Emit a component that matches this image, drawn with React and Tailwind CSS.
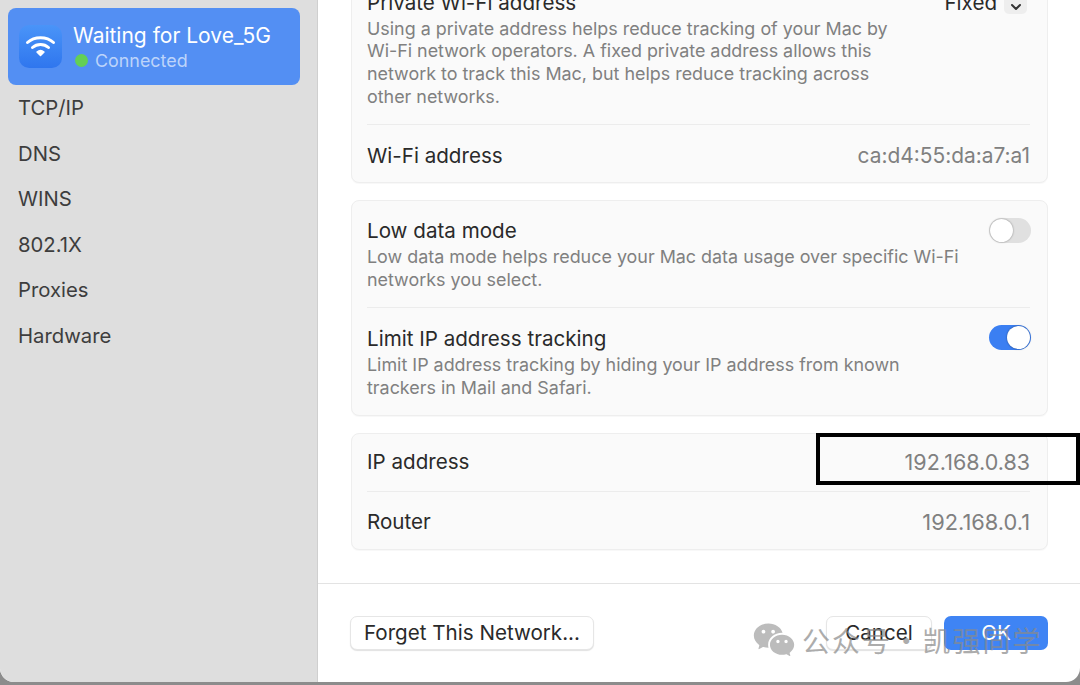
import { RiWechatFill } from "react-icons/ri";

const font = { fontFamily: "Inter, 'Noto Sans CJK SC', sans-serif" };

function WifiIcon() {
  return (
    <div className="w-[43px] h-[43px] rounded-[10px] bg-gradient-to-b from-[#4a94f8] to-[#2f76ee] flex items-center justify-center shrink-0">
      <svg width="31" height="25" viewBox="0 0 31 25" fill="none" stroke="white" strokeLinecap="round">
        <path d="M2.5 8.5C9.5 2 21.5 2 28.5 8.5" strokeWidth="3" />
        <path d="M7.5 13.5C12 9.5 19 9.5 23.5 13.5" strokeWidth="3" />
        <path d="M12 18C14 16.4 17 16.4 19 18L15.5 21.5Z" strokeWidth="1.5" fill="white" strokeLinejoin="round" />
      </svg>
    </div>
  );
}

function Toggle({ on }) {
  return (
    <div className={`w-[42px] h-[25px] -mr-[1px] rounded-full p-[1px] flex shrink-0 ${on ? "bg-[#3b7ff2] justify-end" : "bg-[#e0e0e0] justify-start"}`}>
      <div className="w-[23px] h-[23px] rounded-full bg-white shadow-[0_0_2px_rgba(0,0,0,0.45)]" />
    </div>
  );
}

const Card = ({ className = "", children }) => (
  <div className={`bg-[#fafafa] border border-[#eeeeee] rounded-[8px] pl-[15px] pr-[17px] shadow-[0_1px_1px_rgba(0,0,0,0.03)] ${className}`}>{children}</div>
);

const Label = ({ children }) => <div className="text-[20.6px] leading-[26px] text-[#2a2a2a] whitespace-nowrap">{children}</div>;
const Desc = ({ children, className = "" }) => <p className={`text-[17.9px] leading-[22.7px] text-[#808080] whitespace-nowrap ${className}`}>{children}</p>;

function ToggleRow({ title, desc, on, className, descClass }) {
  return (
    <div className={`flex justify-between ${className}`}>
      <div>
        <Label>{title}</Label>
        <Desc className={descClass}>{desc}</Desc>
      </div>
      <Toggle on={on} />
    </div>
  );
}

export default function App() {
  return (
    <div className="relative w-[1080px] h-[685px] overflow-hidden bg-[#8c8c8c]" style={font}>
      <div className="flex h-[682px] rounded-b-[14px] overflow-hidden bg-white">
        <aside className="w-[318px] shrink-0 bg-[#dedede] border-r border-[#cfcfcf] pt-[8px] px-[8px]">
          <div className="w-[292px] h-[77px] rounded-[8px] bg-[#538ff3] flex items-center pl-[11px] gap-[11px]">
            <WifiIcon />
            <div className="mt-[1px]">
              <div className="text-[21px] leading-[26px] text-white whitespace-nowrap">Waiting for Love_5G</div>
              <div className="flex items-center gap-[7px] mt-[1px] pl-[2px]">
                <span className="w-[13px] h-[13px] rounded-full bg-[#63cf55]" />
                <span className="text-[17.9px] leading-[22px] text-[#bdd4fa]">Connected</span>
              </div>
            </div>
          </div>
          <nav className="pl-[10px] text-[20.3px] leading-[45.5px] text-[#3d3d3d]">
            {["TCP/IP", "DNS", "WINS", "802.1X", "Proxies", "Hardware"].map((t) => (
              <div key={t}>{t}</div>
            ))}
          </nav>
        </aside>

        <main className="flex-1 flex flex-col min-w-0">
          <div className="flex-1 pl-[33px] pr-[32px] flex flex-col gap-[17px] overflow-hidden">
            <Card className="-mt-[11px] h-[194px] shrink-0">
              <div className="flex justify-between h-[135px] border-b border-[#ececec]">
                <div>
                  <Label>Private Wi-Fi address</Label>
                  <Desc className="mt-[1.5px]">
                    Using a private address helps reduce tracking of your Mac by<br />
                    Wi-Fi network operators. A fixed private address allows this<br />
                    network to track this Mac, but helps reduce tracking across<br />
                    other networks.
                  </Desc>
                </div>
                <div className="flex items-start gap-[7px] mr-[3px]">
                  <Label>Fixed</Label>
                  <div className="w-[23px] h-[21px] mt-[3px] rounded-[5px] bg-[#eeeeee] flex items-end justify-center pb-[3px]">
                    <svg width="12" height="8" viewBox="0 0 12 8" fill="none" stroke="#333" strokeWidth="2" strokeLinecap="round" strokeLinejoin="round">
                      <path d="M2 2L6 6L10 2" />
                    </svg>
                  </div>
                </div>
              </div>
              <div className="flex justify-between items-center h-[58px] pt-[3px]">
                <Label>Wi-Fi address</Label>
                <div className="text-[20.9px] leading-[26px] text-[#808080]">ca:d4:55:da:a7:a1</div>
              </div>
            </Card>

            <Card className="h-[216px] shrink-0">
              <ToggleRow
                className="h-[107px] pt-[17px] border-b border-[#ececec]"
                title="Low data mode"
                descClass="mt-[2px]"
                desc={<>Low data mode helps reduce your Mac data usage over specific Wi-Fi<br />networks you select.</>}
              />
              <ToggleRow
                className="pt-[17px]"
                title={<span className="relative top-[1px]">Limit IP address tracking</span>}
                descClass="mt-[3px]"
                on
                desc={<>Limit IP address tracking by hiding your IP address from known<br />trackers in Mail and Safari.</>}
              />
            </Card>

            <Card className="h-[117px] shrink-0">
              <div className="flex justify-between items-center h-[58px] pb-[2px] border-b border-[#ececec]">
                <Label>IP address</Label>
                <div className="text-[21.5px] leading-[26px] text-[#808080]">192.168.0.83</div>
              </div>
              <div className="flex justify-between items-center h-[58px] pt-[2px]">
                <Label>Router</Label>
                <div className="text-[21.8px] leading-[26px] text-[#808080]">192.168.0.1</div>
              </div>
            </Card>
          </div>

          <footer className="h-[99px] shrink-0 border-t border-[#e3e3e3] flex items-center justify-between pl-[32px] pr-[32px]">
            <button className="h-[34px] w-[244px] rounded-[7px] bg-white border border-[#e6e6e6] shadow-[0_1px_1px_rgba(0,0,0,0.12)] text-[20.6px] text-[#2a2a2a] whitespace-nowrap">Forget This Network...</button>
            <div className="flex gap-[12px]">
              <button className="w-[106px] h-[34px] rounded-[7px] bg-white border border-[#e6e6e6] shadow-[0_1px_1px_rgba(0,0,0,0.12)] text-[20.6px] text-[#2a2a2a]">Cancel</button>
              <button className="w-[104px] h-[34px] rounded-[7px] bg-[#3f84f4] text-[20.6px] text-white">OK</button>
            </div>
          </footer>
        </main>
      </div>

      <div className="absolute left-[816px] top-[433px] w-[264px] h-[52px] border-4 border-black" />

      <div className="absolute left-[752px] top-[618px] flex items-center gap-[6px] text-[#8a8a8a] opacity-70 pointer-events-none">
        <RiWechatFill className="w-[44px] h-[44px] text-[#a0a0a0]" />
        <span className="text-[28px] leading-[40px] whitespace-nowrap tracking-[2px] [word-spacing:-8px]" style={{ fontFamily: "'Noto Sans CJK SC', sans-serif" }}>公众号 · 凯强同学</span>
      </div>
    </div>
  );
}
